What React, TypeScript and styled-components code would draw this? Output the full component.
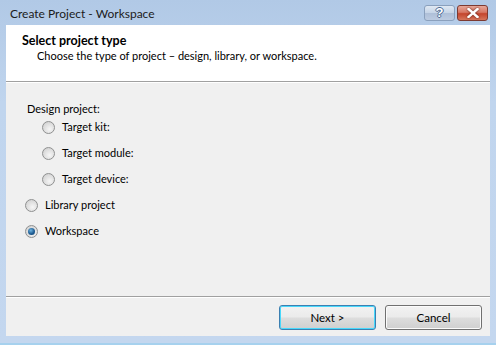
import { FC } from 'react';
import styled, { createGlobalStyle } from 'styled-components';

const GlobalStyle = createGlobalStyle`
  html, body {
    margin: 0;
    padding: 0;
    background: #ffffff;
  }
  body {
    font-family: Lato, 'Liberation Sans', sans-serif;
    font-size: 11px;
    color: #000000;
  }
`;

interface RadioItem {
  label: string;
  checked?: boolean;
  nested?: boolean;
}

const options: RadioItem[] = [
  { label: 'Target kit:', nested: true },
  { label: 'Target module:', nested: true },
  { label: 'Target device:', nested: true },
  { label: 'Library project' },
  { label: 'Workspace', checked: true },
];

const App: FC = () => {
  return (
    <>
      <GlobalStyle />
      <Window>
        <TitleBar>
          <Title>Create Project - Workspace</Title>
          <CaptionButtons>
            <HelpButton>?</HelpButton>
            <CloseButton>
              <svg width="12" height="10" viewBox="0 0 12 10">
                <path d="M1.5 1 L10.5 9 M10.5 1 L1.5 9" stroke="#ffffff" strokeWidth="2.4" strokeLinecap="square" />
              </svg>
            </CloseButton>
          </CaptionButtons>
        </TitleBar>
        <Client>
          <Header>
            <HeaderTitle>Select project type</HeaderTitle>
            <HeaderSub>Choose the type of project &#8211; design, library, or workspace.</HeaderSub>
          </Header>
          <Body>
            <GroupLabel>Design project:</GroupLabel>
            {options.map((opt) => (
              <RadioRow key={opt.label} $nested={opt.nested}>
                <RadioCircle $checked={opt.checked} />
                <RadioLabel>{opt.label}</RadioLabel>
              </RadioRow>
            ))}
          </Body>
          <Footer>
            <Button $isDefault>Next &gt;</Button>
            <Button>Cancel</Button>
          </Footer>
        </Client>
      </Window>
    </>
  );
};

const Window = styled.div`
  width: 496px;
  height: 345px;
  box-sizing: border-box;
  display: flex;
  flex-direction: column;
  padding: 0 6px 7px 6px;
  background: linear-gradient(180deg, #b1c9e6 0%, #c0d5ee 30%, #c4d7ef 100%);
  border-bottom: 2px solid #a6d1ee;
`;

const TitleBar = styled.div`
  height: 25px;
  display: flex;
  align-items: center;
  justify-content: space-between;
  padding-left: 4px;
`;

const Title = styled.div`
  font-size: 12px;
  color: #1b1b1b;
  padding-top: 1px;
`;

const CaptionButtons = styled.div`
  display: flex;
  gap: 2px;
  align-self: flex-start;
  margin-top: 5px;
  margin-right: 2px;
`;

const CaptionButton = styled.div`
  height: 16px;
  box-sizing: border-box;
  border-radius: 3px;
  display: flex;
  align-items: center;
  justify-content: center;
`;

const HelpButton = styled(CaptionButton)`
  width: 31px;
  border: 1px solid #8aa0bd;
  background: linear-gradient(180deg, #dfe8f3 0%, #c5d4e7 50%, #aebfd8 51%, #bccbe1 100%);
  color: #ffffff;
  font-family: 'Liberation Sans', sans-serif;
  font-weight: bold;
  font-size: 13px;
  line-height: 14px;
  text-shadow: 1px 0 0 #4a6a94, -1px 0 0 #4a6a94, 0 1px 0 #4a6a94, 0 -1px 0 #4a6a94;
`;

const CloseButton = styled(CaptionButton)`
  width: 31px;
  border: 1px solid #7d3a31;
  background: linear-gradient(180deg, #e7a799 0%, #d77865 45%, #c4452d 55%, #d6765c 100%);
  svg {
    filter: drop-shadow(0 0 1px #5d1a10);
  }
`;

const Client = styled.div`
  flex: 1;
  display: flex;
  flex-direction: column;
  background: #f0f0f0;
`;

const Header = styled.div`
  height: 57px;
  box-sizing: border-box;
  background: #ffffff;
  border-bottom: 1px solid #a0a0a0;
  box-shadow: 0 1px 0 #ffffff;
  padding: 8px 0 0 16px;
`;

const HeaderTitle = styled.div`
  font-weight: bold;
  font-size: 12.5px;
  line-height: 15px;
`;

const HeaderSub = styled.div`
  line-height: 15px;
  padding-left: 15px;
`;

const Body = styled.div`
  flex: 1;
  padding: 19px 0 0 21px;
  display: flex;
  flex-direction: column;
  border-bottom: 1px solid #a0a0a0;
  box-shadow: 0 1px 0 #ffffff;
`;

const GroupLabel = styled.div`
  line-height: 16px;
  margin-bottom: -3px;
`;

const RadioRow = styled.div<{ $nested?: boolean }>`
  display: flex;
  align-items: center;
  height: 26px;
  margin-left: ${({ $nested }) => ($nested ? 15 : -2)}px;
`;

const RadioCircle = styled.span<{ $checked?: boolean }>`
  position: relative;
  width: 13px;
  height: 13px;
  box-sizing: border-box;
  border-radius: 50%;
  border: 1px solid #8f9090;
  background: radial-gradient(circle at 60% 65%, #f6f6f6 0%, #dcdcdc 60%, #c9c9c9 100%);
  margin-right: 7px;

  &::after {
    content: '';
    display: ${({ $checked }) => ($checked ? 'block' : 'none')};
    position: absolute;
    left: 2px;
    top: 2px;
    width: 7px;
    height: 7px;
    border-radius: 50%;
    background: radial-gradient(circle at 40% 35%, #6fb4e0 0%, #1f5d93 55%, #0e3f6d 100%);
  }
`;

const RadioLabel = styled.span`
  line-height: 16px;
`;

const Footer = styled.div`
  height: 39px;
  box-sizing: border-box;
  display: flex;
  justify-content: flex-end;
  align-items: flex-start;
  gap: 9px;
  padding: 8px 8px 0 0;
`;

const Button = styled.div<{ $isDefault?: boolean }>`
  width: 97px;
  height: 25px;
  box-sizing: border-box;
  border-radius: 3px;
  border: 1px solid ${({ $isDefault }) => ($isDefault ? '#3c7fb1' : '#707070')};
  box-shadow: inset 0 0 0 1px ${({ $isDefault }) => ($isDefault ? '#48d8fb' : '#fbfbfb')};
  background: linear-gradient(180deg, #f2f2f2 0%, #ebebeb 48%, #dddddd 52%, #cfcfcf 100%);
  display: flex;
  align-items: center;
  justify-content: center;
  font-size: 11.5px;
`;

export default App;
